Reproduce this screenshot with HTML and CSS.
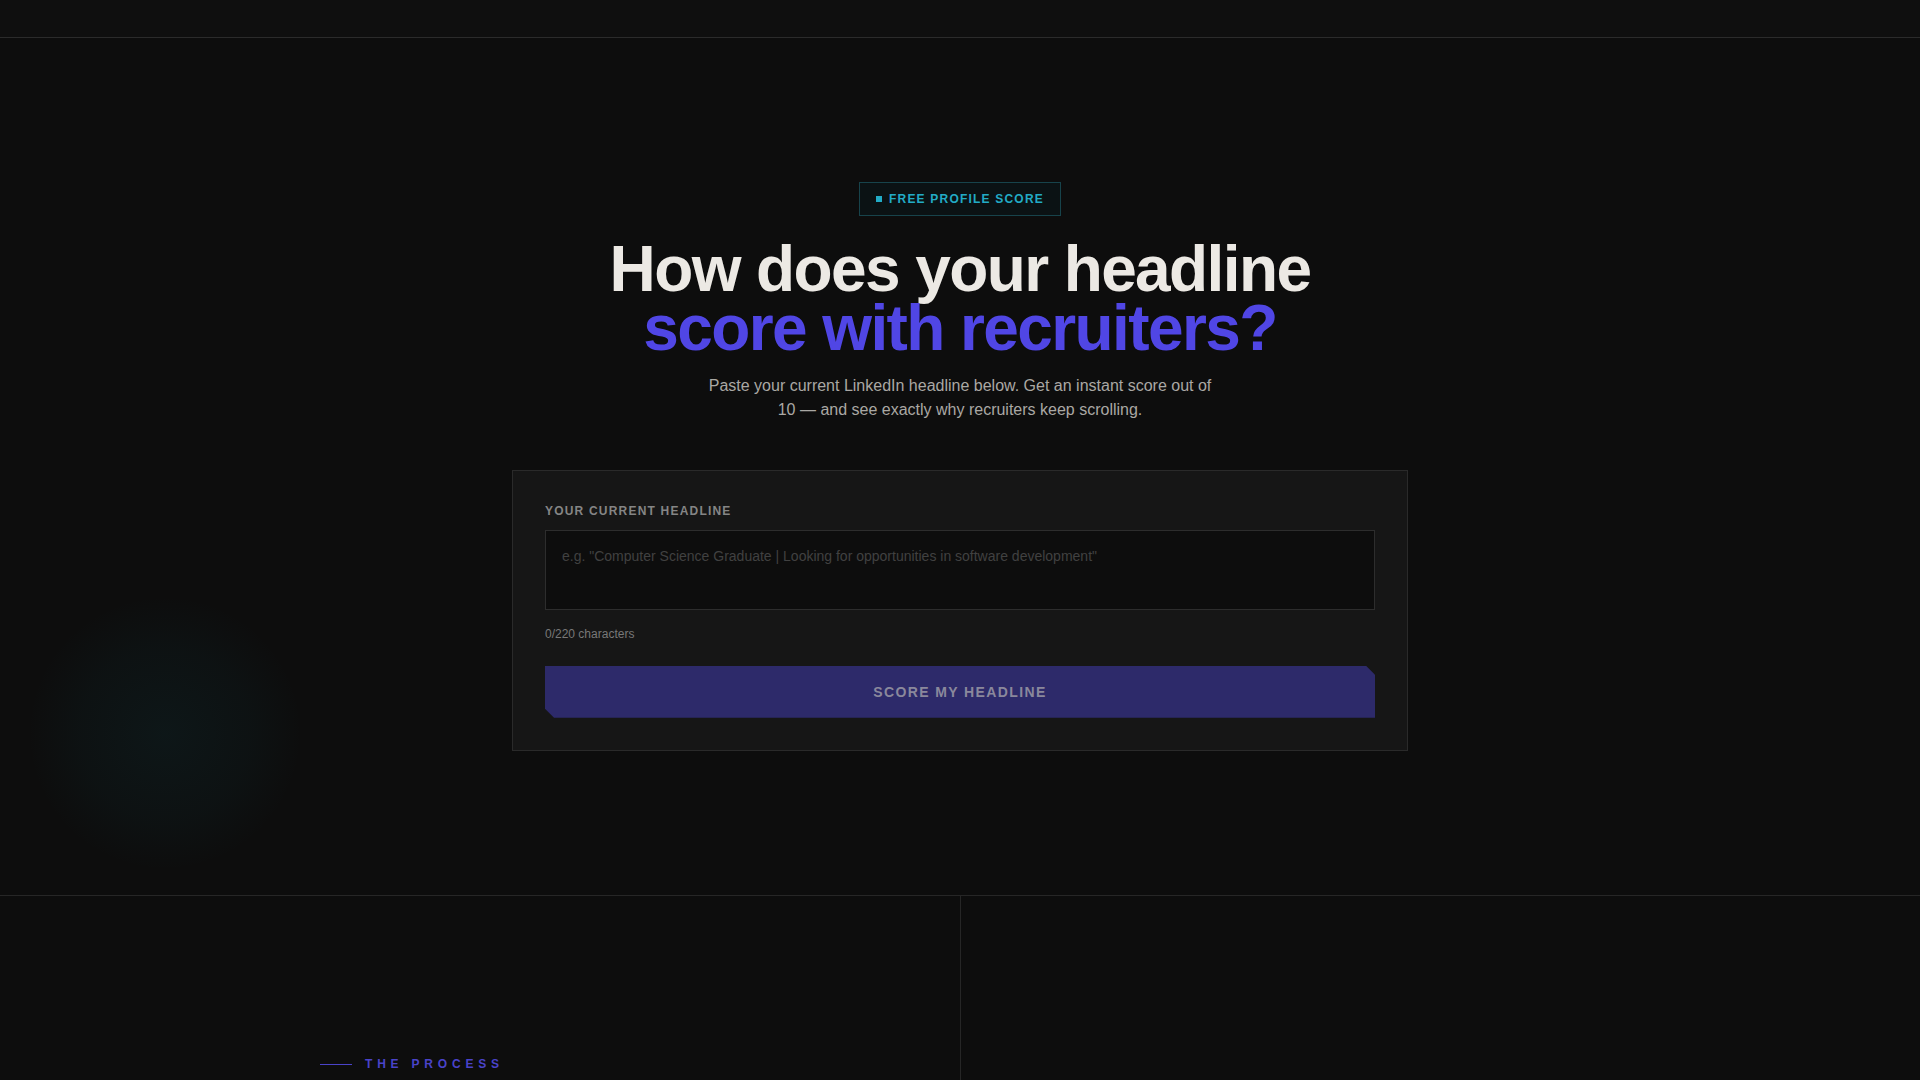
FILE: index.html
```html
<!DOCTYPE html>
<html lang="en">
<head>
<meta charset="utf-8">
<title>Headline Score</title>
<link rel="stylesheet" href="styles.css">
</head>
<body>
<header class="topbar"></header>
<main>
  <section class="hero">
    <div class="glow"></div>
    <div class="badge"><span class="badge-dot"></span>FREE PROFILE SCORE</div>
    <h1 class="title">How does your headline<span class="accent">score with recruiters?</span></h1>
    <p class="subtitle">Paste your current LinkedIn headline below. Get an instant score out of 10 — and see exactly why recruiters keep scrolling.</p>
    <div class="card">
      <label class="field-label" for="headline">YOUR CURRENT HEADLINE</label>
      <textarea id="headline" class="field" placeholder="e.g. &quot;Computer Science Graduate | Looking for opportunities in software development&quot;"></textarea>
      <div class="counter">0/220 characters</div>
      <button class="submit" type="button">SCORE MY HEADLINE</button>
    </div>
  </section>
  <section class="process">
    <div class="process-col process-left">
      <div class="eyebrow"><span class="eyebrow-line"></span>THE PROCESS</div>
    </div>
    <div class="process-col process-right"></div>
  </section>
</main>
</body>
</html>
```

FILE: styles.css
```css
* { box-sizing: border-box; }

html, body {
  margin: 0;
  padding: 0;
  background: #0d0d0d;
  color: #ece9e4;
  font-family: "Liberation Sans", Arial, sans-serif;
  overflow: hidden;
}

.topbar {
  height: 38px;
  background: #0f0f0f;
  border-bottom: 1px solid #2b2b2b;
}

.hero {
  position: relative;
  height: 858px;
  padding-top: 144px;
  display: flex;
  flex-direction: column;
  align-items: center;
  border-bottom: 1px solid #262626;
}

.glow {
  position: absolute;
  left: 30px;
  top: 560px;
  width: 270px;
  height: 270px;
  border-radius: 50%;
  background: radial-gradient(circle, rgba(20, 150, 170, 0.07) 0%, rgba(20, 150, 170, 0.035) 45%, rgba(20, 150, 170, 0) 72%);
  pointer-events: none;
}

.badge {
  display: flex;
  align-items: center;
  gap: 7px;
  height: 34px;
  padding: 0 16px;
  border: 1px solid #17434b;
  background: #0b1214;
  color: #22abc6;
  font-size: 12px;
  font-weight: 700;
  letter-spacing: 0.1em;
  line-height: 16px;
}

.badge-dot {
  width: 6px;
  height: 6px;
  background: #22abc6;
}

.title {
  margin: 24px 0 0;
  font-size: 64px;
  font-weight: 700;
  line-height: 0.92;
  letter-spacing: -0.025em;
  text-align: center;
  color: #ece9e4;
}

.accent {
  display: block;
  color: #5046e5;
}

.subtitle {
  margin: 16px 0 0;
  max-width: 516px;
  font-size: 16px;
  line-height: 24px;
  text-align: center;
  color: #aaa8a4;
}

.card {
  margin-top: 48px;
  width: 896px;
  padding: 32px;
  background: #161616;
  border: 1px solid #2a2a2a;
  display: flex;
  flex-direction: column;
}

.field-label {
  font-size: 12px;
  line-height: 16px;
  font-weight: 700;
  letter-spacing: 0.1em;
  color: #858585;
}

.field {
  margin-top: 11px;
  height: 80px;
  width: 100%;
  resize: none;
  padding: 15px 16px;
  background: #0d0d0d;
  border: 1px solid #2d2d2d;
  border-radius: 0;
  color: #ece9e4;
  font-family: "Liberation Sans", Arial, sans-serif;
  font-size: 14px;
  line-height: 20px;
  outline: none;
}

.field::placeholder {
  color: #414141;
}

.counter {
  margin-top: 15px;
  font-size: 12px;
  line-height: 18px;
  color: #787878;
}

.submit {
  margin-top: 23px;
  height: 52px;
  width: 100%;
  border: 0;
  background: #2d2a6a;
  color: #8a889c;
  font-family: "Liberation Sans", Arial, sans-serif;
  font-size: 14px;
  font-weight: 700;
  letter-spacing: 0.1em;
  clip-path: polygon(0 0, calc(100% - 9px) 0, 100% 9px, 100% 100%, 9px 100%, 0 calc(100% - 9px));
}

.process {
  display: grid;
  grid-template-columns: 1fr 1fr;
  height: 184px;
}

.process-left {
  padding: 160px 0 0 320px;
}

.process-right {
  border-left: 1px solid #262626;
}

.eyebrow {
  display: flex;
  align-items: center;
  gap: 13px;
  font-size: 12px;
  line-height: 16px;
  font-weight: 700;
  letter-spacing: 0.4em;
  color: #4a43c9;
}

.eyebrow-line {
  width: 32px;
  height: 1px;
  background: #4a43c9;
}
```
